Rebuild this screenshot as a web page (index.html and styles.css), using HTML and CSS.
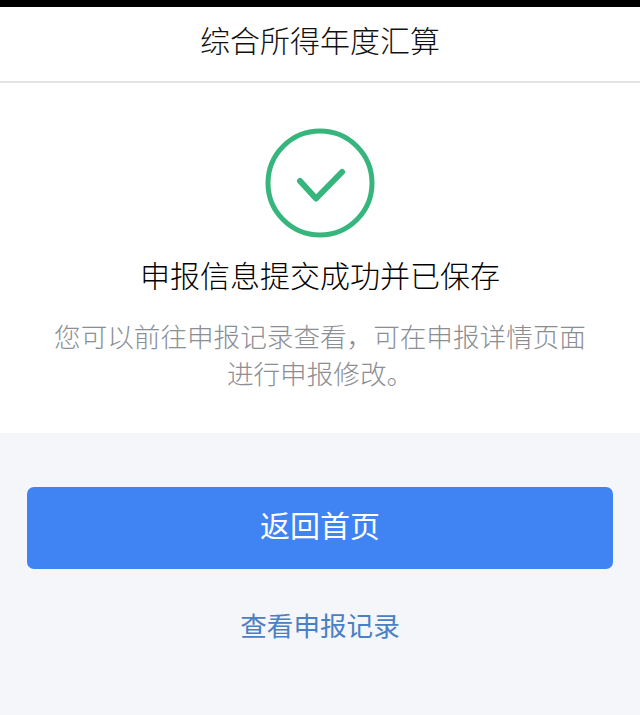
FILE: index.html
```html
<!DOCTYPE html>
<html lang="zh-CN">
<head>
<meta charset="utf-8">
<title>综合所得年度汇算</title>
<link rel="stylesheet" href="styles.css">
</head>
<body>
<div class="status-bar"></div>
<header class="nav">综合所得年度汇算</header>
<section class="result">
  <svg class="icon" width="110" height="110" viewBox="0 0 110 110" fill="none">
    <circle cx="55" cy="55" r="52" stroke="#36b67c" stroke-width="5"/>
    <path d="M35 53L51 70.500L77 44" stroke="#36b67c" stroke-width="6" stroke-linecap="round" stroke-linejoin="round"/>
  </svg>
  <h1 class="title">申报信息提交成功并已保存</h1>
  <p class="desc">您可以前往申报记录查看，可在申报详情页面<br>进行申报修改。</p>
</section>
<section class="actions">
  <a class="primary">返回首页</a>
  <a class="link">查看申报记录</a>
</section>
</body>
</html>
```
FILE: styles.css
```css
* { box-sizing: border-box; }
html, body { margin: 0; padding: 0; }
body {
  width: 640px;
  height: 715px;
  overflow: hidden;
  display: flex;
  flex-direction: column;
  background: #f5f6fa;
  font-family: "Liberation Sans", "Noto Sans CJK SC", sans-serif;
}
.status-bar { height: 7px; background: #000; flex: none; }
.nav {
  height: 76px;
  flex: none;
  display: flex;
  align-items: center;
  justify-content: center;
  background: #fff;
  border-bottom: 2px solid #e4e4e4;
  color: #111;
  font-size: 30px;
  font-weight: 300;
  padding-bottom: 10px;
}
.result {
  height: 350px;
  flex: none;
  background: #fff;
  display: flex;
  flex-direction: column;
  align-items: center;
  padding-top: 45px;
}
.icon { display: block; flex: none; }
.title {
  margin: 17px 0 0;
  font-size: 30px;
  line-height: 44px;
  font-weight: 300;
  color: #000;
}
.desc {
  margin: 21px 0 0;
  font-size: 26.600px;
  line-height: 37px;
  font-weight: 300;
  color: #8c8e93;
  text-align: center;
}
.actions {
  display: flex;
  flex-direction: column;
  align-items: center;
  padding: 54px 27px 0;
}
.primary {
  width: 100%;
  height: 82px;
  display: flex;
  align-items: center;
  justify-content: center;
  border-radius: 7px;
  background: #4084f3;
  color: #fff;
  font-size: 30px;
  font-weight: 400;
  padding-bottom: 8px;
}
.link {
  margin-top: 36px;
  font-size: 26.600px;
  line-height: 44px;
  font-weight: 400;
  color: #4a80c4;
}
```
